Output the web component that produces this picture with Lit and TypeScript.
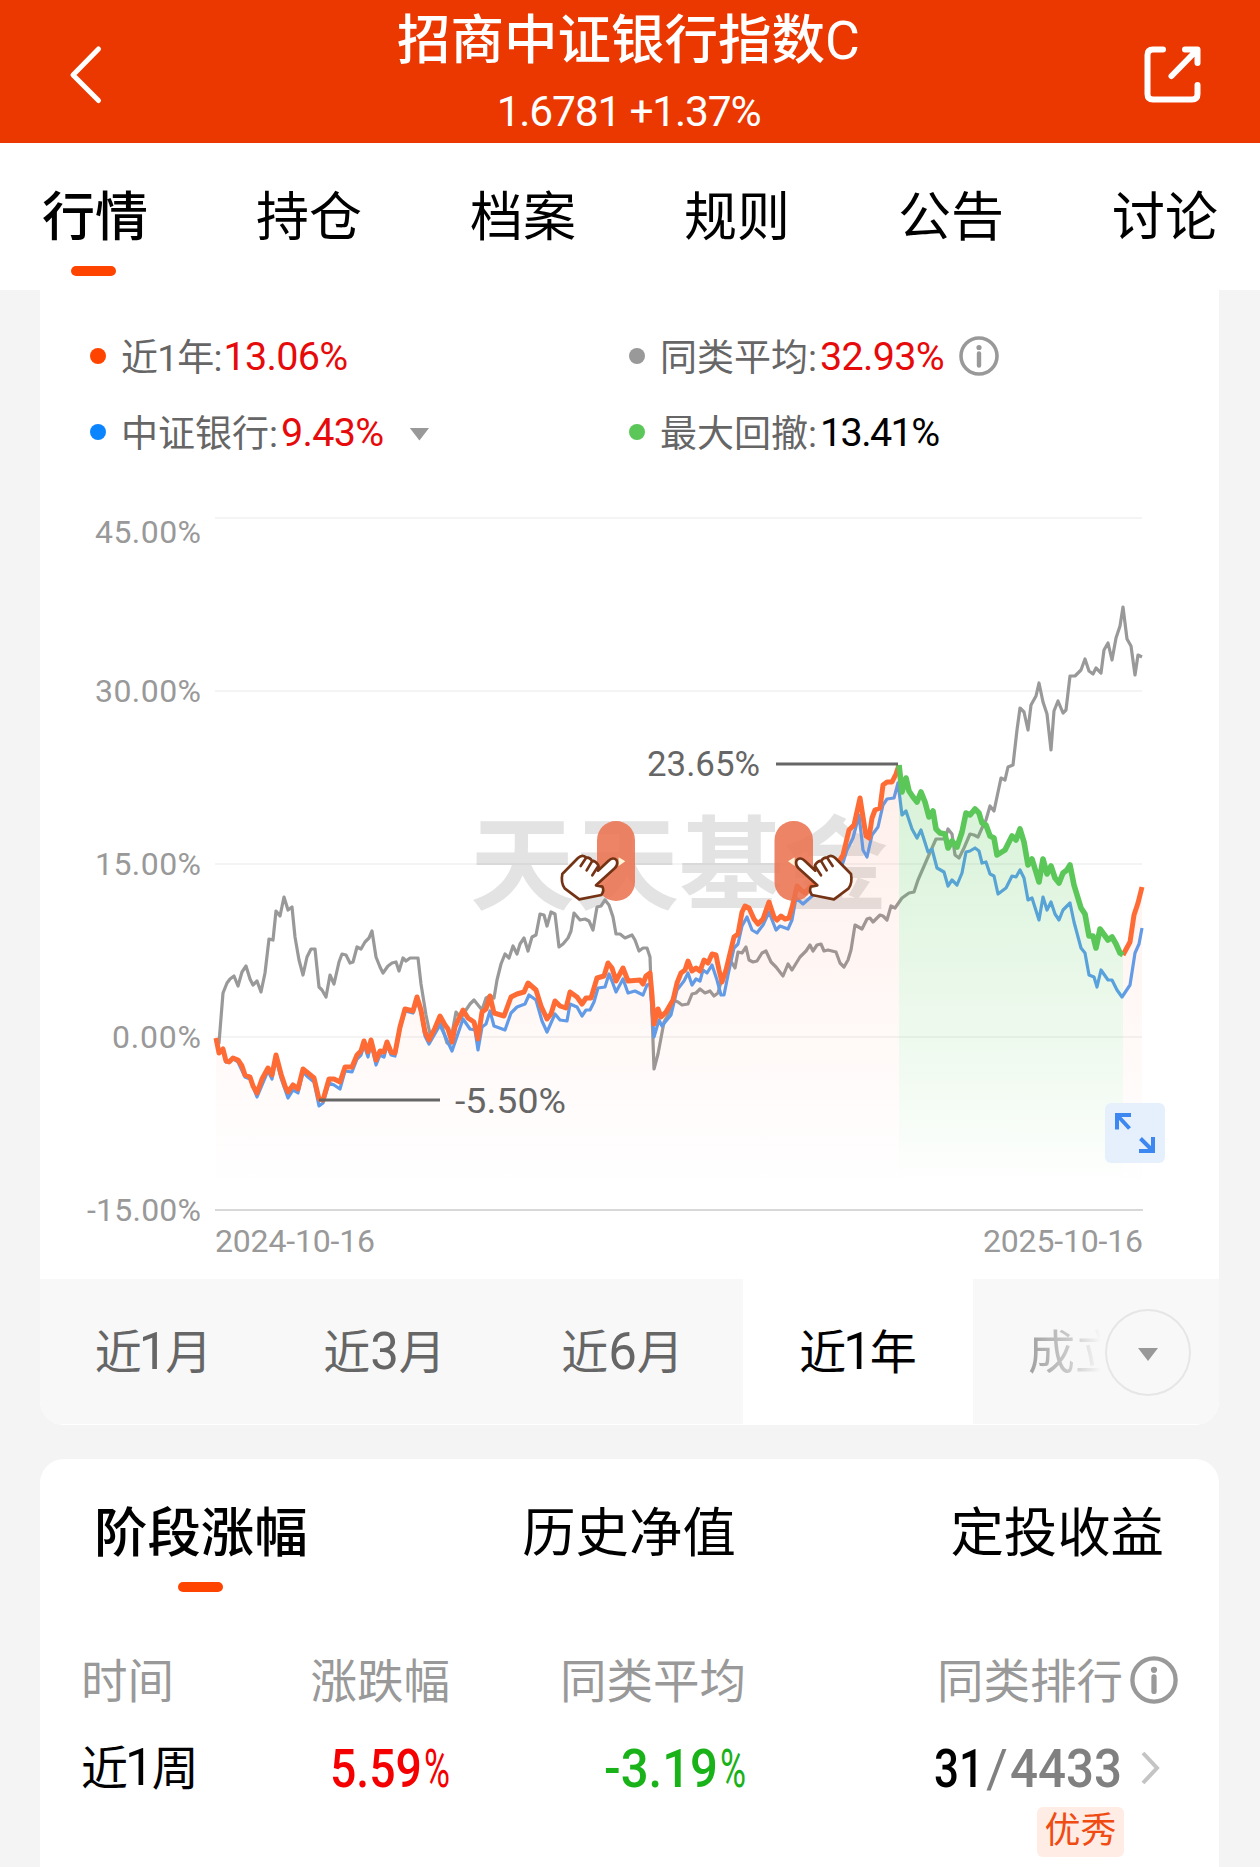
import { LitElement, html, svg, css } from "lit";
import { customElement, state } from "lit/decorators.js";
import { classMap } from "lit/directives/class-map.js";

const AVERAGE =
  "216,1040 219,1043 223,993 227,983 230,979 234,976 238,986 242,972 246,966 250,979 253,985 257,981 261,992 265,973 269,939 273,940 276,911 280,916 284,897 288,910 292,907 295,937 299,960 303,975 307,957 311,949 315,949 319,987 322,990 326,997 330,975 334,984 339,962 342,954 346,955 350,963 353,962 357,947 361,949 365,942 369,938 372,931 376,957 380,967 383,973 388,966 392,963 396,962 399,971 403,958 406,961 410,958 418,958 421,984 426,1015 430,1034 435,1031 441,1023 447,1043 450,1045 453,1028 456,1012 461,1018 466,1010 470,1004 474,1000 478,1005 482,1010 486,998 490,996 494,998 497,980 501,964 505,954 509,958 513,946 517,954 520,944 524,938 528,951 532,937 536,935 540,914 544,915 547,926 551,912 555,914 559,947 563,944 568,938 571,931 574,913 580,920 585,919 589,921 593,930 597,907 601,906 605,900 609,905 613,917 616,934 620,934 625,938 632,935 635,940 639,951 643,948 647,948 650,957 651,985 654,1069 658,1054 664,1022 668,1015 673,1000 678,1002 682,1005 688,1004 692,994 696,993 700,989 705,993 710,991 714,996 718,993 722,978 729,965 732,963 735,968 738,952 742,953 746,947 749,960 753,962 757,961 762,953 766,951 771,962 776,967 783,976 788,964 792,970 800,957 806,951 810,945 813,951 817,945 821,944 824,951 828,950 836,952 840,963 844,967 848,960 851,950 855,925 862,929 867,919 870,918 873,922 880,915 883,916 887,920 891,906 895,908 902,898 909,893 914,892 918,880 928,857 936,839 945,839 948,829 952,834 955,855 959,858 964,848 970,834 974,835 978,837 982,828 986,820 990,806 994,811 1001,778 1005,780 1008,767 1013,765 1017,730 1020,708 1024,712 1028,730 1031,705 1036,696 1039,683 1043,702 1047,714 1051,750 1054,711 1058,701 1063,713 1066,710 1070,676 1075,676 1081,670 1085,659 1089,671 1093,674 1096,668 1101,673 1104,650 1108,643 1112,660 1116,638 1120,626 1123,607 1127,639 1131,646 1135,675 1138,655 1142,657";

const RISE =
  "216,1038 219,1053 223,1049 226,1061 229,1062 233,1058 238,1060 242,1066 245,1075 250,1077 253,1086 257,1093 262,1079 268,1068 272,1075 276,1055 281,1074 285,1086 288,1092 293,1085 298,1089 303,1069 308,1073 314,1078 319,1099 323,1100 329,1079 334,1079 340,1082 345,1067 352,1067 357,1055 361,1051 364,1041 368,1052 371,1040 376,1060 380,1051 384,1052 387,1042 391,1052 395,1053 400,1027 405,1009 409,1010 413,1011 417,997 421,1010 425,1032 429,1040 435,1028 440,1016 445,1025 448,1029 452,1042 455,1027 463,1010 468,1018 474,1022 478,1039 482,1012 486,1009 490,996 494,1013 504,1016 511,997 517,994 524,992 528,983 536,990 541,1006 547,1019 551,1014 555,1001 560,1006 566,1008 570,992 577,997 582,1004 586,998 591,998 597,978 604,976 608,963 612,968 616,981 623,968 628,981 640,980 643,984 646,976 650,973 652,995 654,1024 658,1009 661,1017 666,1012 673,1000 677,983 681,973 685,970 688,961 692,971 696,968 700,971 704,960 708,963 712,954 716,955 719,970 722,982 726,970 734,937 738,934 742,912 745,906 749,908 754,919 758,924 763,919 769,902 774,917 777,920 781,916 785,919 789,918 793,904 797,886 801,890 805,893 815,882 825,874 835,868 843,855 849,830 854,825 860,798 866,836 869,838 872,818 875,810 880,808 883,785 887,782 892,782 896,774 899,765";

const DRAWDOWN =
  "899,765 902,792 906,778 909,791 913,797 917,802 921,792 925,802 929,817 933,811 936,829 940,833 945,834 948,848 952,841 957,847 962,832 966,813 970,815 975,809 979,813 982,823 986,825 990,836 994,838 997,855 1005,850 1012,836 1016,840 1020,829 1024,842 1028,865 1032,859 1039,882 1043,859 1047,874 1051,866 1055,878 1059,883 1063,873 1067,870 1070,865 1074,885 1081,908 1085,914 1089,936 1093,936 1096,948 1100,929 1108,940 1112,937 1116,944 1120,953 1123,955";

const RECOVERY = "1123,955 1130,942 1134,915 1138,903 1142,887";

const INDEX =
  "216,1040 219,1053 223,1051 226,1062 233,1059 238,1062 245,1077 250,1079 257,1097 268,1071 272,1079 276,1058 281,1078 288,1098 293,1090 298,1093 303,1072 308,1077 314,1082 319,1106 323,1103 329,1083 334,1085 340,1089 345,1071 352,1072 357,1059 361,1055 364,1045 368,1057 371,1044 376,1065 380,1055 384,1057 387,1045 391,1055 395,1056 400,1029 405,1011 409,1012 413,1013 417,1000 421,1013 425,1036 429,1044 440,1025 452,1051 463,1019 470,1029 475,1030 478,1050 482,1027 486,1024 490,1011 494,1026 505,1030 511,1013 517,1007 525,1004 529,995 536,1000 542,1021 547,1032 555,1014 560,1020 567,1021 570,1004 577,1007 582,1016 586,1010 590,1010 594,1002 598,988 605,987 609,974 612,981 616,992 623,979 628,993 635,991 643,995 647,985 650,984 654,1037 659,1020 662,1026 666,1021 671,1015 677,990 684,981 688,973 692,985 696,979 700,981 703,970 707,973 712,965 717,980 721,995 724,995 728,975 734,948 738,944 742,926 747,917 752,930 757,933 763,925 769,912 776,930 780,926 788,929 792,920 796,898 803,904 812,896 825,885 838,878 847,850 853,838 859,815 863,850 867,857 872,835 878,827 883,805 887,799 894,798 898,783 902,815 906,811 912,829 917,838 921,830 928,852 932,849 937,868 944,872 948,886 952,880 957,885 962,873 966,852 970,851 975,848 979,851 982,863 986,862 990,874 994,876 998,894 1006,888 1012,876 1016,877 1020,870 1024,878 1028,900 1032,898 1039,920 1043,897 1047,910 1051,902 1055,914 1059,920 1063,910 1070,903 1074,922 1081,948 1085,953 1089,975 1094,977 1097,987 1101,970 1108,980 1112,980 1117,990 1122,997 1130,985 1135,953 1139,944 1142,928";

@customElement("info-icon")
class InfoIcon extends LitElement {
  static styles = css`
    :host { display: block; }
    svg { display: block; width: 100%; height: 100%; }
  `;
  render() {
    return html`<svg viewBox="0 0 40 40" fill="none" stroke="#999">
      <circle cx="20" cy="20" r="18" stroke-width="3.6"></circle>
      <circle cx="20" cy="11.5" r="2.6" fill="#999" stroke="none"></circle>
      <path d="M20 17.500V29.500" stroke-width="4.400" stroke-linecap="round"></path>
    </svg>`;
  }
}

@customElement("fund-chart")
class FundChart extends LitElement {
  static styles = css`
    :host { display: block; }
    svg { display: block; }
    text { font-family: Roboto, "Noto Sans CJK SC", sans-serif; }
    .axis { font-size: 32px; fill: #999; }
    .mark { font-size: 35.500px; fill: #666; }
    .water { font-size: 102px; font-weight: 700; fill: #e3e3e3; font-family: "Noto Sans CJK SC", sans-serif; }
    .line { fill: none; stroke-linejoin: round; }
  `;

  private hand() {
    return svg`
      <path d="M536 232 L556 244 L536 258 Z" fill="#fff3d8"></path>
      <path d="M474 272 L505 243 Q520 229 530 241 Q535 253 525 264 L468 316 L487 320 Q494 332 484 345 L418 358 L374 325 Q362 308 367 282 L414 234 Q426 222 438 232 Q450 232 456 242 Q468 244 474 254 Q478 262 474 272 Z"
        fill="#fff" stroke="#743315" stroke-width="8" stroke-linejoin="round"></path>
      <path d="M438 234 L422 258 M456 244 L440 271 M475 258 L457 286"
        fill="none" stroke="#743315" stroke-width="8" stroke-linecap="round"></path>`;
  }

  render() {
    const ticks: [string, number, number][] = [
      ["45.00%", 95, 532],
      ["30.00%", 95, 691],
      ["15.00%", 95, 864],
      ["0.00%", 112, 1037],
      ["-15.00%", 87, 1210],
    ];
    return html`<svg width="1179" height="799" viewBox="40 480 1179 799">
      <defs>
        <linearGradient id="warm" gradientUnits="userSpaceOnUse" x1="0" y1="765" x2="0" y2="1190">
          <stop offset="0" stop-color="#ff6a3a" stop-opacity=".11"></stop>
          <stop offset="1" stop-color="#ff6a3a" stop-opacity="0"></stop>
        </linearGradient>
        <linearGradient id="fresh" gradientUnits="userSpaceOnUse" x1="0" y1="765" x2="0" y2="1190">
          <stop offset="0" stop-color="#4cc44c" stop-opacity=".23"></stop>
          <stop offset=".75" stop-color="#4cc44c" stop-opacity=".07"></stop>
          <stop offset="1" stop-color="#4cc44c" stop-opacity="0"></stop>
        </linearGradient>
      </defs>
      <text class="water" x="470" y="902" textLength="418" lengthAdjust="spacingAndGlyphs">天天基金</text>
      ${[518, 691, 864, 1037].map(
        (y) => svg`<path d="M215 ${y}H1142" stroke="#000" stroke-opacity=".045" stroke-width="2"></path>`
      )}
      <path d="M215 1210H1143" stroke="#d8d8d8" stroke-width="2"></path>
      ${ticks.map(
        ([t, x, y]) => svg`<text class="axis" x=${x} y=${y + 11} textLength=${201 - x}>${t}</text>`
      )}
      <text class="axis" x="215" y="1252" textLength="160">2024-10-16</text>
      <text class="axis" x="983" y="1252" textLength="160">2025-10-16</text>
      <polyline class="line" points=${AVERAGE} stroke="#999" stroke-width="3.2"></polyline>
      <polyline class="line" points=${INDEX} stroke="#5a9df0" stroke-width="3.2"></polyline>
      <polygon points="216,1200 ${RISE} 899,1200" fill="url(#warm)"></polygon>
      <polygon points="899,1200 ${DRAWDOWN} 1123,1200" fill="url(#fresh)"></polygon>
      <polygon points="1123,1200 ${RECOVERY} 1142,1200" fill="url(#warm)"></polygon>
      <polyline class="line" points=${RISE} stroke="#ff6b35" stroke-width="5"></polyline>
      <polyline class="line" points=${RECOVERY} stroke="#ff6b35" stroke-width="5"></polyline>
      <polyline class="line" points=${DRAWDOWN} stroke="#5bc759" stroke-width="5.6"></polyline>
      <path d="M776 764H898M319 1100H440" stroke="#666" stroke-width="3"></path>
      <text class="mark" x="647" y="775.500" textLength="113" lengthAdjust="spacingAndGlyphs">23.65%</text>
      <text class="mark" x="455" y="1112.500" textLength="111" lengthAdjust="spacingAndGlyphs">-5.50%</text>
      <rect x="597" y="821" width="38" height="80" rx="19" fill="#ea7350" fill-opacity=".88"></rect>
      <rect x="774.500" y="821" width="38.500" height="80" rx="19" fill="#ea7350" fill-opacity=".88"></rect>
      <g transform="translate(440 780) scale(.3333)">${this.hand()}</g>
      <g transform="translate(973.300 780) scale(-.3333 .3333)">${this.hand()}</g>
      <rect x="1105" y="1103" width="60" height="60" rx="6" fill="#e3eefd" fill-opacity=".88"></rect>
      <path d="M1131 1115H1117V1129.500M1117 1115L1129.500 1128.500M1139 1151H1153V1137M1153 1151L1140.500 1138.500"
        fill="none" stroke="#3d87f0" stroke-width="4"></path>
    </svg>`;
  }
}

@customElement("app-root")
class AppRoot extends LitElement {
  @state() private tab = 0;
  @state() private range = 3;

  static styles = css`
    :host {
      display: block;
      width: 1260px;
      height: 1867px;
      overflow: hidden;
      background: #f4f4f4;
      color: #000;
      font-family: Roboto, "Noto Sans CJK SC", sans-serif;
    }
    * { box-sizing: border-box; }
    header {
      height: 143px;
      background: #eb3700;
      color: #fff;
      display: flex;
      justify-content: space-between;
      align-items: center;
      padding: 6px 57px 0 68px;
    }
    header svg { display: block; }
    .heading {
      display: flex;
      flex-direction: column;
      align-items: center;
      margin: -6px 0 0 10px;
      height: 143px;
      padding-top: 10px;
    }
    .title { font-size: 53.500px; line-height: 62px; font-weight: 500; }
    .title span { font-weight: 400; }
    .quote { font-size: 42.500px; line-height: 50px; margin-top: 15px; letter-spacing: -1.2px; }
    .tabs {
      height: 147px;
      background: #fff;
      display: flex;
      justify-content: space-between;
      padding: 37px 42px 0;
    }
    .tab { position: relative; font-size: 53px; line-height: 76px; height: 99px; }
    .tab.on { font-weight: 500; }
    .tab.on::after {
      content: "";
      position: absolute;
      left: calc(50% - 24px);
      bottom: 3px;
      width: 45px;
      height: 10px;
      border-radius: 5px;
      background: #ff4400;
    }
    .card { margin: 0 41px 0 40px; background: #fff; }
    .chart { height: 1135px; border-radius: 0 0 24px 24px; overflow: hidden; }
    .legend {
      height: 190px;
      padding: 28px 0 0 50px;
      display: grid;
      grid-template-columns: 539px 1fr;
      grid-template-rows: 76px 76px;
      align-items: center;
      font-size: 37px;
      color: #666;
    }
    .item { display: flex; align-items: center; }
    .name { margin-top: -3px; }
    .dot { width: 16px; height: 16px; border-radius: 50%; margin-right: 15px; }
    .c-orange { background: #ff4400; }
    .c-gray { background: #999; }
    .c-blue { background: #0a84ff; }
    .c-green { background: #5bc759; }
    .value { font-size: 39.500px; color: #e60a0a; margin-left: 3px; letter-spacing: -.7px; }
    .value.plain { color: #000; letter-spacing: -1.6px; }
    .short .name { letter-spacing: -.8px; }
    .short .value { margin-left: 2px; }
    .item info-icon { width: 40px; height: 40px; margin-left: 15px; }
    .caret { width: 20px; height: 13px; background: #999; clip-path: polygon(0 0, 100% 0, 50% 100%); }
    .item .caret { margin: 4px 0 0 26px; }
    .ranges {
      display: grid;
      grid-template-columns: 227px 235px 241px 230px 246px;
      height: 145px;
      background: #f8f8f8;
      color: #666;
      font-size: 47px;
    }
    .range { display: flex; align-items: center; justify-content: center; padding-bottom: 6px; }
    .range span { display: flex; align-items: baseline; }
    .range b, .cell b { font-weight: 400; font-size: 51px; line-height: 60px; }
    .range b.one, .cell b.one { margin: 0 -2px 0 -3px; }
    .range.on { background: #fff; color: #000; }
    .more {
      display: flex;
      align-items: center;
      justify-content: space-between;
      padding: 0 28px 0 55px;
    }
    .fade {
      width: 78px;
      margin-top: -6px;
      overflow: hidden;
      white-space: nowrap;
      background: linear-gradient(90deg, #a0a0a0 0%, #d0d0d0 60%, #f8f8f8 95%);
      background-clip: text;
      -webkit-background-clip: text;
      color: transparent;
    }
    .round {
      width: 87px;
      height: 87px;
      margin-top: 2px;
      border: 2px solid #e6e6e6;
      border-radius: 50%;
      display: flex;
      align-items: center;
      justify-content: center;
    }
    .round .caret { margin-top: 4px; }
    .period { margin-top: 34px; height: 430px; border-radius: 24px 24px 0 0; }
    .sections { display: flex; justify-content: space-between; padding: 36px 55px 0 54px; }
    .sections .tab { height: 102px; font-size: 53.400px; line-height: 78px; }
    .sections .tab.on::after { left: 84px; bottom: 5px; }
    .grid {
      display: grid;
      grid-template-columns: 228px 141px 296px 432px;
      padding: 0 0 0 41px;
      margin-top: 49px;
    }
    .grid > * { height: 70px; display: flex; align-items: center; }
    .grid .head { font-size: 46.500px; color: #999; white-space: nowrap; padding-bottom: 8px; }
    .end { justify-content: flex-end; }
    .rank { justify-content: flex-end; }
    .rank info-icon { width: 48px; height: 48px; margin: 5px 0 0 7px; }
    .grid .cell { height: 104px; font-size: 47px; }
    .cell .period-name { display: flex; align-items: baseline; margin-top: -8px; }
    .fig { display: block; overflow: visible; }
    .fig text { font-family: Roboto, sans-serif; }
    .arrow { margin-left: 20px; margin-right: 17px; }
    .tagrow { display: flex; justify-content: flex-end; padding-right: 95px; margin-top: -13px; }
    .tag {
      width: 87px;
      height: 50px;
      border-radius: 6px;
      background: #ffece5;
      color: #f04b12;
      font-size: 36px;
      line-height: 49px;
      text-align: center;
    }
  `;

  private fig(parts: [string, number, number, string, number][], width: number) {
    return html`<svg class="fig" width=${width} height="60" viewBox="0 0 ${width} 60">
      ${parts.map(
        ([t, x, w, color, weight]) =>
          svg`<text x=${x} y="49" font-size="53" font-weight=${weight} fill=${color} textLength=${w} lengthAdjust="spacingAndGlyphs">${t}</text>`
      )}
    </svg>`;
  }

  private span(digit: string, unit: string) {
    return html`近<b class=${classMap({ one: digit === "1" })}>${digit}</b>${unit}`;
  }

  render() {
    const tabs = ["行情", "持仓", "档案", "规则", "公告", "讨论"];
    const ranges = [["1", "月"], ["3", "月"], ["6", "月"], ["1", "年"]];
    const sections = ["阶段涨幅", "历史净值", "定投收益"];
    return html`
      <header>
        <svg width="36" height="60" viewBox="0 0 36 60" fill="none" stroke="#fff" stroke-width="5" stroke-linecap="round" stroke-linejoin="round">
          <path d="M30.500 4L5 30L30.500 55.500"></path>
        </svg>
        <div class="heading">
          <div class="title">招商中证银行指数<span>C</span></div>
          <div class="quote">1.6781 +1.37%</div>
        </div>
        <svg width="60" height="60" viewBox="0 0 60 60" fill="none" stroke="#fff" stroke-width="6" stroke-linecap="round" stroke-linejoin="round">
          <path d="M20 4.500H10Q4.500 4.500 4.500 10V49Q4.500 54.500 10 54.500H49Q54.500 54.500 54.500 49V40M42 4.500H54.500V18M53 6L28.500 31"></path>
        </svg>
      </header>
      <nav class="tabs">
        ${tabs.map(
          (t, i) => html`<div class=${classMap({ tab: true, on: i === this.tab })} @click=${() => (this.tab = i)}>${t}</div>`
        )}
      </nav>
      <section class="card chart">
        <div class="legend">
          <div class="item short"><i class="dot c-orange"></i><span class="name">近1年:</span><span class="value">13.06%</span></div>
          <div class="item"><i class="dot c-gray"></i><span class="name">同类平均:</span><span class="value">32.93%</span><info-icon></info-icon></div>
          <div class="item"><i class="dot c-blue"></i><span class="name">中证银行:</span><span class="value">9.43%</span><i class="caret"></i></div>
          <div class="item"><i class="dot c-green"></i><span class="name">最大回撤:</span><span class="value plain">13.41%</span></div>
        </div>
        <fund-chart></fund-chart>
        <div class="ranges">
          ${ranges.map(
            ([d, u], i) => html`<div class=${classMap({ range: true, on: i === this.range })} @click=${() => (this.range = i)}><span>${this.span(d, u)}</span></div>`
          )}
          <div class="more">
            <span class="fade">成立</span>
            <span class="round"><i class="caret"></i></span>
          </div>
        </div>
      </section>
      <section class="card period">
        <div class="sections">
          ${sections.map((t, i) => html`<div class=${classMap({ tab: true, on: i === 0 })}>${t}</div>`)}
        </div>
        <div class="grid">
          <div class="head">时间</div>
          <div class="head end">涨跌幅</div>
          <div class="head end">同类平均</div>
          <div class="head rank">同类排行<info-icon></info-icon></div>
          <div class="cell"><span class="period-name">${this.span("1", "周")}</span></div>
          <div class="cell end">${this.fig([["5.59", 0, 92, "#f40000", 500], ["%", 94, 26, "#f40000", 400]], 120)}</div>
          <div class="cell end">${this.fig([["-3.19", 0, 114, "#19b219", 500], ["%", 116, 26, "#19b219", 400]], 142)}</div>
          <div class="cell rank">
            ${this.fig([["31", 0, 50, "#000", 500], ["/", 52, 22, "#808080", 400], ["4433", 76, 112, "#808080", 500]], 187)}
            <svg class="arrow" width="20" height="36" viewBox="0 0 20 36" fill="none" stroke="#c4c4c4" stroke-width="4">
              <path d="M2 3L16 18L2 33"></path>
            </svg>
          </div>
        </div>
        <div class="tagrow"><span class="tag">优秀</span></div>
      </section>
    `;
  }
}
